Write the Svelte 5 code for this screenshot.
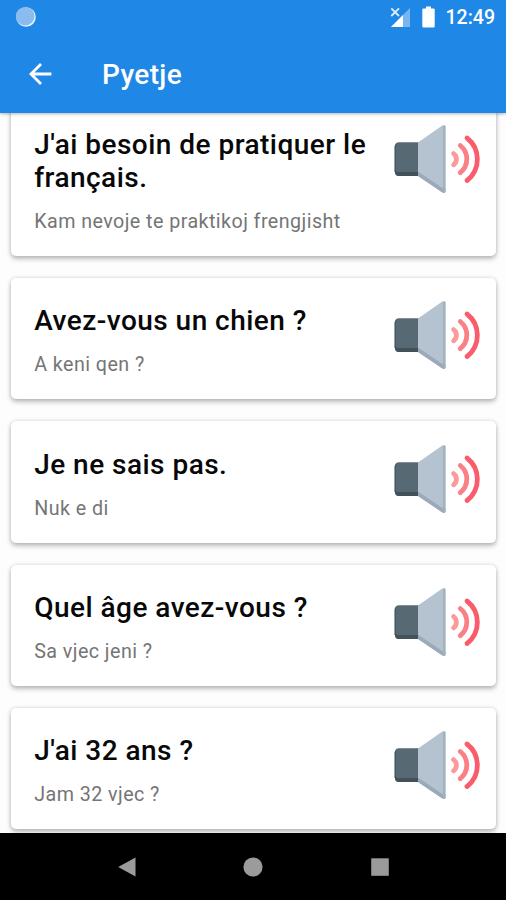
<script lang="ts">
	const title = 'Pyetje';
	const time = '12:49';

	const phrases = [
		{ text: "J'ai besoin de pratiquer le français.", translation: 'Kam nevoje te praktikoj frengjisht' },
		{ text: 'Avez-vous un chien ?', translation: 'A keni qen ?' },
		{ text: 'Je ne sais pas.', translation: 'Nuk e di' },
		{ text: 'Quel âge avez-vous ?', translation: 'Sa vjec jeni ?' },
		{ text: "J'ai 32 ans ?", translation: 'Jam 32 vjec ?' }
	];
</script>

<div class="screen">
	<header class="header">
		<div class="status-bar">
			<svg class="spinner" width="22" height="22" viewBox="0 0 22 22">
				<circle cx="11" cy="11" r="9.8" fill="#e6f5ff" />
				<circle cx="10.2" cy="10.2" r="9.3" fill="#8abcf0" />
			</svg>
			<div class="status-icons">
				<svg width="22" height="22" viewBox="0 0 22 22">
					<path d="M20 2V21H1Z" fill="#79b6ef" />
					<path d="M13 9V21H1Z" fill="#fff" />
					<path d="M0 1H11V10H0Z" fill="#1f87e5" />
					<path d="M1.3 2.3L9 10M9 2.3L1.3 10" stroke="#d9efff" stroke-width="1.8" />
				</svg>
				<svg class="battery" width="13" height="22" viewBox="0 0 13 22">
					<path d="M4 0.5H9V2.5H11.5Q12.7 2.5 12.7 3.7V20.3Q12.7 21.5 11.5 21.5H1.5Q0.3 21.5 0.3 20.3V3.7Q0.3 2.5 1.5 2.5H4Z" fill="#fff" />
				</svg>
				<span class="time">{time}</span>
			</div>
		</div>
		<div class="toolbar">
			<button type="button" class="back" aria-label="Back">
				<svg width="24" height="24" viewBox="0 0 24 24" fill="none" stroke="#fff" stroke-width="2.8">
					<path d="M23.4 12H3.6M13 2L3 12L13 22" />
				</svg>
			</button>
			<h1 class="title">{title}</h1>
		</div>
	</header>

	<main class="list">
		{#each phrases as phrase}
			<article class="card">
				<div class="card-text">
					<h2 class="phrase">{phrase.text}</h2>
					<p class="translation">{phrase.translation}</p>
				</div>
				<button type="button" class="speaker" aria-label="Listen">
					<svg width="90" height="70" viewBox="0 0 90 70">
						<path d="M7 18.3H27V52H7Q3 52 3 48V22.3Q3 18.3 7 18.3Z" fill="#576a74" />
						<path d="M3 45Q3 48 7 48H27V52H7Q3 52 3 48Z" fill="#435159" />
						<path d="M4 20.5Q3 21.5 3 23V48" fill="none" stroke="#2c4a54" stroke-width="1" />
						<path d="M26 18.5L50 1.7Q53.5 0 53.5 2.5V67.5Q53.5 70 50 68.2L26 52Z" fill="#b4c3cf" />
						<path d="M26 47.5L50 63.8Q52.5 65 53.5 64V67.5Q53.5 70 50 68.2L26 52Z" fill="#9aaab9" />
						<path d="M52.2 2V68" stroke="#a2b1be" stroke-width="2.4" />
						<g fill="none" stroke-linecap="round" stroke-width="4.8">
							<path d="M61.6 29.6A7 7 0 0 1 61.6 40.8" stroke="#fa9a9b" />
							<path d="M68.3 21.5A17.5 17.5 0 0 1 68.3 48.7" stroke="#f98186" />
							<path d="M75 14A27 27 0 0 1 75 56.5" stroke="#fb5c6b" />
						</g>
					</svg>
				</button>
			</article>
		{/each}
	</main>

	<nav class="nav-bar">
		<svg width="22" height="22" viewBox="0 0 22 22"><path d="M2.2 11L19.5 1.5V20.5Z" fill="#9b9b9b" /></svg>
		<svg width="22" height="22" viewBox="0 0 22 22"><circle cx="11" cy="11" r="9.6" fill="#9b9b9b" /></svg>
		<svg width="22" height="22" viewBox="0 0 22 22"><path d="M2.2 2.3H19.8V19.8H2.2Z" fill="#9b9b9b" /></svg>
	</nav>
</div>

<style>
	:global(body) {
		margin: 0;
	}

	.screen {
		display: flex;
		flex-direction: column;
		width: 506px;
		height: 900px;
		overflow: hidden;
		background: #fdfdfd;
		font-family: Roboto, "Liberation Sans", sans-serif;
	}

	button {
		display: flex;
		padding: 0;
		border: none;
		background: none;
		cursor: pointer;
	}

	.header {
		position: relative;
		z-index: 1;
		flex: none;
		height: 113px;
		background: #1f87e5;
		box-shadow: 0 1px 3px rgba(0, 0, 0, 0.3);
	}

	.status-bar {
		display: flex;
		align-items: center;
		justify-content: space-between;
		height: 34px;
		padding: 0 11px 0 15px;
	}

	.status-icons {
		display: flex;
		align-items: center;
	}

	.battery {
		margin-left: 10px;
	}

	.time {
		margin-left: 11px;
		padding-top: 2px;
		color: #fff;
		font-size: 19.5px;
		font-weight: 500;
		line-height: 22px;
	}

	.toolbar {
		display: flex;
		align-items: center;
		height: 79px;
		padding-left: 28px;
	}

	.title {
		margin: 2px 0 0 50px;
		color: #fff;
		font-size: 28px;
		font-weight: 500;
		line-height: 33px;
		letter-spacing: 0.35px;
	}

	.list {
		display: flex;
		flex: 1;
		flex-direction: column;
		gap: 22px;
		min-height: 0;
		/* scrolled a little under the toolbar */
		margin-top: -11.6px;
		padding: 0 10px 0 11px;
		overflow: hidden;
	}

	.card {
		display: flex;
		flex: none;
		align-items: flex-start;
		padding: 26.5px 14.5px 22.9px 23.2px;
		border-radius: 5px;
		background: #fff;
		box-shadow: 0 3px 5px rgba(0, 0, 0, 0.24), 0 0 4px rgba(0, 0, 0, 0.14);
	}

	.card-text {
		flex: 1;
		min-width: 0;
	}

	.phrase {
		margin: 0;
		color: #080808;
		font-size: 28px;
		font-weight: 500;
		line-height: 33px;
		letter-spacing: 0.47px;
		white-space: pre-line;
	}

	.translation {
		margin: 16px 0 0;
		color: #757575;
		font-size: 19.7px;
		line-height: 23px;
		letter-spacing: 0.44px;
	}

	.speaker {
		flex: none;
		margin: -4px 0 -30px;
	}

	.nav-bar {
		display: flex;
		flex: none;
		align-items: center;
		justify-content: center;
		gap: 104.5px;
		height: 67px;
		background: #000;
	}
</style>
